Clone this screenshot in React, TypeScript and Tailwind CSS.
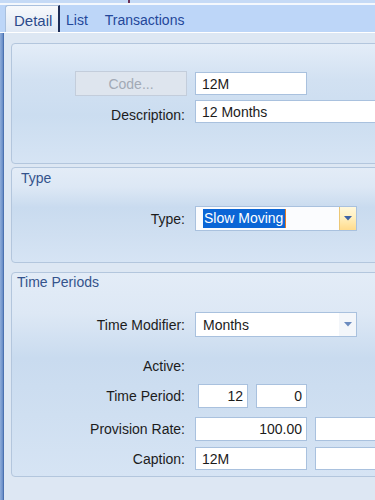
import React from "react";

const panelBg =
  "bg-[linear-gradient(to_bottom,#e4edf8_0%,#d2e1f2_30%,#cbddf0_60%,#d6e4f4_100%)]";
const panelBgHeader =
  "bg-[linear-gradient(to_bottom,#e3ecf7_0%,#dde8f5_20%,#c9dbef_42%,#cfdff1_70%,#d6e4f4_100%)]";

function Label({ children, extra = "" }: { children: React.ReactNode; extra?: string }) {
  return (
    <div className={`w-[173px] shrink-0 text-right text-[#1c1c1c] leading-[16px] ${extra}`}>
      {children}
    </div>
  );
}

function Field({
  children,
  w,
  h = "h-[24px]",
  right = false,
}: {
  children?: React.ReactNode;
  w: string;
  h?: string;
  right?: boolean;
}) {
  return (
    <div
      className={`${w} ${h} shrink-0 bg-white border border-[#a9c1de] flex items-center text-[#1b1b1b] leading-[16px] ${
        right ? "justify-end pr-[4px]" : "pl-[6px]"
      }`}
    >
      {children}
    </div>
  );
}

function Arrow({ color }: { color: string }) {
  return (
    <svg width="8" height="5" viewBox="0 0 8 5">
      <path d="M0 0 H8 L4 4.5 Z" fill={color} />
    </svg>
  );
}

export default function App() {
  return (
    <div className="w-[375px] h-[500px] overflow-hidden bg-[#dde7f3] flex flex-col font-['Liberation_Sans',Arial,sans-serif] text-[14px]">
      {/* top strip */}
      <div className="h-[3px] bg-[#c5daf6] relative shrink-0">
        <div className="absolute left-[128px] top-0 w-[2px] h-[3px] bg-[#6a2f55]" />
      </div>
      <div className="h-[2px] bg-[#f4f8fd] shrink-0" />
      {/* tab bar */}
      <div className="h-[27px] bg-[#bdd6f8] flex items-end shrink-0 pl-[5px]">
        <div className="h-[27px] w-[55px] rounded-tl-[3px] border-l border-t border-[#a9c0de] border-r-2 border-r-[#1d2c55] bg-[linear-gradient(to_bottom,#f7f9fc_0%,#e9eff7_60%,#e0e9f5_100%)] flex items-center pl-[8px] pt-[4px] text-[15px] text-[#2c4b8c]">
          Detail
        </div>
        <div className="h-[27px] flex items-center pt-[4px] ml-[6px] text-[#23479a]">List</div>
        <div className="h-[27px] flex items-center pt-[4px] ml-[17px] text-[#23479a]">
          Transactions
        </div>
      </div>
      <div className="h-px bg-white shrink-0" />
      {/* content */}
      <div className="flex-1 flex">
        <div className="w-[4px] shrink-0 bg-[linear-gradient(to_right,#8eacd9,#6f93cb_60%,#3b62a4)]" />
        <div className="flex-1 pl-[7px] pt-[10px] flex flex-col">
          {/* Panel 1 */}
          <div
            className={`w-[400px] h-[121px] shrink-0 border border-[#b3c6dd] rounded-[4px] ${panelBg} flex flex-col`}
          >
            <div className="mt-[27px] h-[25px] flex items-center">
              <div className="w-[175px] shrink-0 flex justify-end pl-[63px]">
                <div className="w-[112px] h-[25px] bg-[#dee5ee] border border-[#c3cddb] flex items-center justify-center text-[#a2aab6] leading-[16px] pt-[1px]">
                  Code...
                </div>
              </div>
              <div className="ml-[8px]">
                <Field w="w-[112px]" h="h-[23px]">
                  12M
                </Field>
              </div>
            </div>
            <div className="mt-[4px] flex items-start">
              <Label extra="pt-[7px]">Description:</Label>
              <div className="ml-[10px]">
                <Field w="w-[220px]" h="h-[23px]">
                  12 Months
                </Field>
              </div>
            </div>
          </div>

          {/* Panel 2 */}
          <div
            className={`mt-[3px] w-[400px] h-[96px] shrink-0 border border-[#b3c6dd] rounded-[4px] ${panelBgHeader} flex flex-col`}
          >
            <div className="mt-[2px] pl-[9px] leading-[16px] text-[#34538c]">Type</div>
            <div className="mt-[20px] h-[25px] flex items-center">
              <Label>Type:</Label>
              <div className="ml-[10px] w-[162px] h-[25px] border border-[#a9c1de] bg-[#fbfcfe] flex">
                <div className="flex-1 flex items-center pl-[7px]">
                  <span className="bg-[#0b66d6] text-white leading-[19px] h-[19px] pl-[1px] pr-[2px]">
                    Slow Moving
                  </span>
                  <span className="w-px h-[19px] bg-[#e57b22]" />
                </div>
                <div className="w-[17px] border-l border-[#ecc775] bg-[linear-gradient(to_bottom,#fff8dd_0%,#fff0bf_45%,#ffdb8c_100%)] flex items-center justify-center">
                  <Arrow color="#3e63a6" />
                </div>
              </div>
            </div>
          </div>

          {/* Panel 3 */}
          <div
            className={`mt-[9px] w-[400px] h-[205px] shrink-0 border border-[#b3c6dd] rounded-[4px] ${panelBgHeader} flex flex-col`}
          >
            <div className="mt-[1px] pl-[5px] leading-[16px] text-[#34538c]">Time Periods</div>
            <div className="mt-[22px] h-[25px] flex items-center">
              <Label>Time Modifier:</Label>
              <div className="ml-[10px] w-[162px] h-[25px] border border-[#a9c1de] bg-white flex">
                <div className="flex-1 flex items-center pl-[7px] text-[#1b1b1b] leading-[16px]">
                  Months
                </div>
                <div className="w-[17px] bg-[#f3f6fa] flex items-center justify-center">
                  <Arrow color="#6b8bbf" />
                </div>
              </div>
            </div>
            <div className="mt-[17px] h-[24px] flex items-center">
              <Label>Active:</Label>
            </div>
            <div className="mt-[6px] h-[24px] flex items-center">
              <Label>Time Period:</Label>
              <div className="ml-[13px]">
                <Field w="w-[50px]" right>
                  12
                </Field>
              </div>
              <div className="ml-[8px]">
                <Field w="w-[51px]" right>
                  0
                </Field>
              </div>
            </div>
            <div className="mt-[9px] h-[24px] flex items-center">
              <Label>Provision Rate:</Label>
              <div className="ml-[10px]">
                <Field w="w-[112px]" right>
                  100.00
                </Field>
              </div>
              <div className="ml-[8px]">
                <Field w="w-[80px]" />
              </div>
            </div>
            <div className="mt-[6px] h-[23px] flex items-center">
              <Label>Caption:</Label>
              <div className="ml-[10px]">
                <Field w="w-[112px]" h="h-[23px]">
                  12M
                </Field>
              </div>
              <div className="ml-[8px]">
                <Field w="w-[80px]" h="h-[23px]" />
              </div>
            </div>
          </div>
        </div>
      </div>
    </div>
  );
}
